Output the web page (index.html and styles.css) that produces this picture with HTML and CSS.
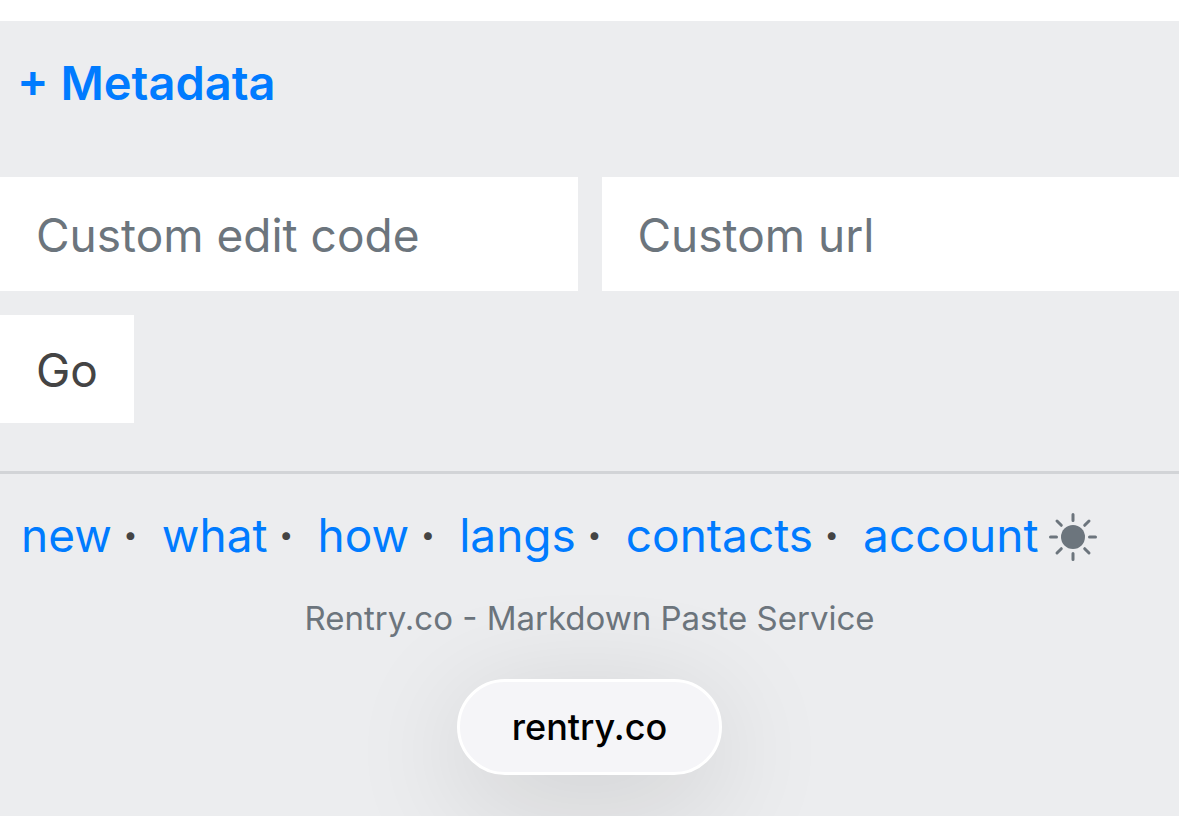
FILE: index.html
```html
<!DOCTYPE html>
<html lang="en">
<head>
    <meta charset="utf-8">
    <meta name="viewport" content="width=device-width, initial-scale=1">
    <link rel="stylesheet" href="styles.css">
    <title>Rentry.co</title>
</head>

<body>
    <main class="content">
        <a class="metadata" href="#">+ Metadata</a>
        <form class="paste-form">
            <div class="fields">
                <input type="text" class="field" name="edit_code" placeholder="Custom edit code" aria-label="Custom edit code">
                <input type="text" class="field" name="url" placeholder="Custom url" aria-label="Custom url">
            </div>
            <button type="submit" class="go">Go</button>
        </form>
    </main>

    <footer class="footer">
        <nav class="links">
            <a href="#">new</a><span class="dot">·</span>
            <a href="#">what</a><span class="dot">·</span>
            <a href="#">how</a><span class="dot">·</span>
            <a href="#">langs</a><span class="dot">·</span>
            <a href="#">contacts</a><span class="dot">·</span>
            <a href="#">account</a>
            <button type="button" class="theme" aria-label="Dark mode">
                <svg viewBox="0 0 48 48" width="48" height="48">
                    <circle cx="24" cy="24" r="12" fill="#6c757d"/>
                    <path d="M24 1.5v6M24 40.5v6M1.5 24h6M40.5 24h6M8 8l4.3 4.3M35.7 35.7l4.3 4.3M40 8l-4.3 4.3M12.3 35.7l-4.3 4.3" fill="none" stroke="#6c757d" stroke-width="3" stroke-linecap="round"/>
                </svg>
            </button>
        </nav>
        <p class="tagline">Rentry.co - Markdown Paste Service</p>
    </footer>

    <a class="address" href="#">rentry.co</a>
</body>
</html>
```

FILE: styles.css
```css
* {
    box-sizing: border-box;
}
body {
    margin: 0;
    border-top: 21px solid #ffffff;
    background-color: #ecedef;
    font-family: Inter, "Liberation Sans", sans-serif;
    font-size: 46px;
    color: #444444;
    display: flex;
    flex-direction: column;
    min-height: 100vh;
}
a {
    color: #007bff;
    text-decoration: none;
}
.content {
    padding-top: 32px;
    padding-bottom: 48px;
    border-bottom: 3px solid #d2d4d7;
}
.metadata {
    display: block;
    padding-left: 17px;
    font-size: 47px;
    font-weight: 600;
    line-height: 60px;
}
.paste-form {
    margin-top: 64px;
}
.fields {
    display: flex;
    gap: 24px;
    margin-bottom: 24px;
}
.field {
    flex: 1;
    min-width: 0;
    height: 114px;
    padding: 2px 36px 0;
    border: 0;
    border-radius: 0;
    background-color: #ffffff;
    font: inherit;
    color: #444444;
}
.field::placeholder {
    color: #6c757d;
    opacity: 1;
}
.go {
    height: 108px;
    padding: 2px 36px 0;
    border: 0;
    background-color: #ffffff;
    font: inherit;
    color: #444444;
    display: block;
}
.footer {
    padding-top: 31px;
}
.links {
    display: flex;
    align-items: center;
    padding-left: 21px;
    line-height: 60px;
}
.dot {
    width: 50px;
    padding-left: 11px;
    font-weight: 700;
}
.theme {
    display: flex;
    margin-left: 10px;
    padding: 4px 0 0;
    border: 0;
    background: none;
}
.tagline {
    margin: 31px 0 0;
    text-align: center;
    font-size: 33px;
    line-height: 44px;
    color: #6c757d;
}
.address {
    align-self: center;
    margin-top: 39px;
    padding: 0 52px;
    border: 3px solid #ffffff;
    border-radius: 48px;
    background-color: #f5f5f8;
    box-shadow: 0 24px 120px rgba(0, 0, 0, 0.14);
    font-size: 36px;
    font-weight: 500;
    line-height: 90px;
    color: #000000;
}
```
